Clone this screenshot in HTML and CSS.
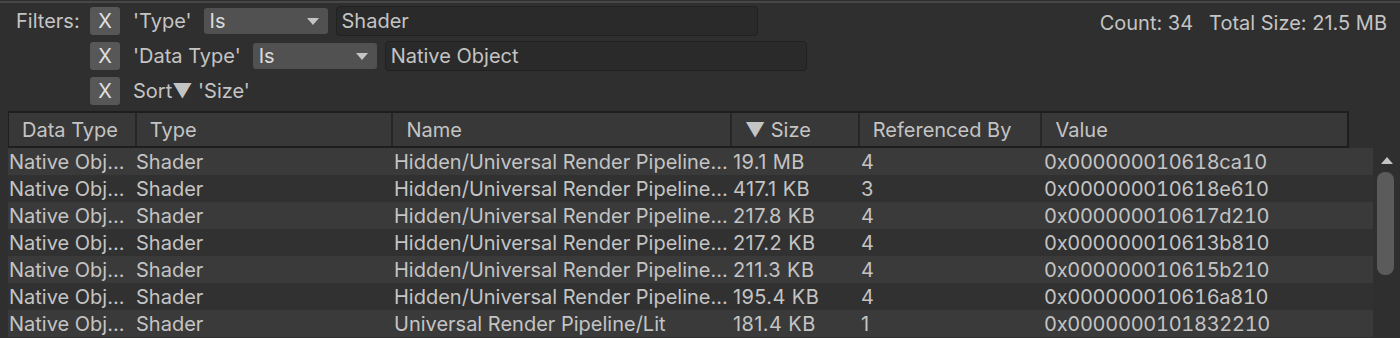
FILE: index.html
```html
<html>
<head>
  <meta charset="utf-8">
  <title>Memory Profiler - Objects</title>
  <link rel="stylesheet" href="styles.css">
</head>
<body>
  <div id="panel">
    <div class="toolbar">
      <div class="filters">
        <div class="filter-label">Filters:</div>
        <div class="filter-row">
          <div class="btn-x">X</div>
          <span class="filter-name">'Type'</span>
          <div class="dropdown">Is<span class="caret"></span></div>
          <div class="textfield">Shader</div>
        </div>
        <div class="filter-row">
          <div class="btn-x">X</div>
          <span class="filter-name">'Data Type'</span>
          <div class="dropdown">Is<span class="caret"></span></div>
          <div class="textfield">Native Object</div>
        </div>
        <div class="filter-row">
          <div class="btn-x">X</div>
          <span class="filter-name">Sort&#9660; 'Size'</span>
        </div>
      </div>
      <div class="stats">
        <span>Count: 34</span>
        <span>Total Size: 21.5 MB</span>
      </div>
    </div>

    <div class="table">
      <div class="table-body">
        <div class="header">
          <div class="th c-data">Data Type</div>
          <div class="th c-type">Type</div>
          <div class="th c-name">Name</div>
          <div class="th c-size">&#9660; Size</div>
          <div class="th c-refs">Referenced By</div>
          <div class="th c-value">Value</div>
        </div>
        <div class="rows">
          <div class="row">
            <div class="td c-data">Native Obj...</div><div class="td c-type">Shader</div>
            <div class="td c-name">Hidden/Universal Render Pipeline...</div><div class="td c-size">19.1 MB</div>
            <div class="td c-refs">4</div><div class="td c-value">0x000000010618ca10</div>
          </div>
          <div class="row">
            <div class="td c-data">Native Obj...</div><div class="td c-type">Shader</div>
            <div class="td c-name">Hidden/Universal Render Pipeline...</div><div class="td c-size">417.1 KB</div>
            <div class="td c-refs">3</div><div class="td c-value">0x000000010618e610</div>
          </div>
          <div class="row">
            <div class="td c-data">Native Obj...</div><div class="td c-type">Shader</div>
            <div class="td c-name">Hidden/Universal Render Pipeline...</div><div class="td c-size">217.8 KB</div>
            <div class="td c-refs">4</div><div class="td c-value">0x000000010617d210</div>
          </div>
          <div class="row">
            <div class="td c-data">Native Obj...</div><div class="td c-type">Shader</div>
            <div class="td c-name">Hidden/Universal Render Pipeline...</div><div class="td c-size">217.2 KB</div>
            <div class="td c-refs">4</div><div class="td c-value">0x000000010613b810</div>
          </div>
          <div class="row">
            <div class="td c-data">Native Obj...</div><div class="td c-type">Shader</div>
            <div class="td c-name">Hidden/Universal Render Pipeline...</div><div class="td c-size">211.3 KB</div>
            <div class="td c-refs">4</div><div class="td c-value">0x000000010615b210</div>
          </div>
          <div class="row">
            <div class="td c-data">Native Obj...</div><div class="td c-type">Shader</div>
            <div class="td c-name">Hidden/Universal Render Pipeline...</div><div class="td c-size">195.4 KB</div>
            <div class="td c-refs">4</div><div class="td c-value">0x000000010616a810</div>
          </div>
          <div class="row">
            <div class="td c-data">Native Obj...</div><div class="td c-type">Shader</div>
            <div class="td c-name">Universal Render Pipeline/Lit</div><div class="td c-size">181.4 KB</div>
            <div class="td c-refs">1</div><div class="td c-value">0x0000000101832210</div>
          </div>
        </div>
      </div>
      <div class="scrollbar">
        <div class="scroll-up"></div>
        <div class="thumb"></div>
      </div>
    </div>
  </div>
</body>
</html>
```

FILE: styles.css
```css
body {
  margin: 0;
  font-family: Inter, 'Noto Sans', sans-serif;
  font-size: 20px;
  color: #c4c4c4;
  background-color: #2f2f2f;
  overflow: hidden;
}

#panel {
  border-top: 2px solid #474747;
  margin-top: 1px;
  height: 335px;
  overflow: hidden;
}

.toolbar {
  display: flex;
  justify-content: space-between;
  align-items: flex-start;
  padding: 4px 13px 0 16px;
}

.filters {
  display: grid;
  grid-template-columns: 74px auto;
  row-gap: 7px;
}

.filter-label {
  grid-row: 1;
  line-height: 28px;
}

.filter-row {
  grid-column: 2;
  display: flex;
  align-items: center;
  height: 28px;
}

.btn-x {
  width: 30px;
  height: 28px;
  line-height: 28px;
  text-align: center;
  background-color: #575757;
  border-radius: 3px;
  color: #e0e0e0;
  margin-right: 13px;
}

.filter-name {
  margin-right: 12px;
}

.dropdown {
  position: relative;
  width: 118px;
  height: 26px;
  line-height: 26px;
  padding-left: 6px;
  background-color: #515151;
  border-radius: 3px;
  margin-right: 8px;
  color: #dcdcdc;
}

.caret {
  position: absolute;
  right: 9px;
  top: 10px;
  border-left: 6px solid transparent;
  border-right: 6px solid transparent;
  border-top: 7px solid #c4c4c4;
}

.textfield {
  width: 415px;
  height: 28px;
  line-height: 28px;
  padding-left: 5px;
  background-color: #2a2a2a;
  border: 1px solid #212121;
  border-radius: 4px;
}

.stats {
  display: flex;
  gap: 16px;
  line-height: 32px;
}

.table {
  display: flex;
  margin-top: 6px;
  padding-left: 8px;
}

.table-body {
  width: 1365px;
}

.header {
  display: flex;
  width: 1338px;
  height: 33px;
  background-color: #383838;
  border: 1px solid #1e1e1e;
  border-width: 2px 2px 2px 1px;
}

.th {
  line-height: 35px;
  padding-left: 13px;
  border-right: 2px solid #262626;
  box-sizing: border-box;
  white-space: nowrap;
}

.th.c-value {
  border-right: none;
}

.row {
  display: flex;
  height: 27px;
  line-height: 29px;
  background-color: #3a3a3a;
}

.row:nth-child(even) {
  background-color: #313131;
}

.td {
  padding-left: 1px;
  box-sizing: border-box;
  white-space: nowrap;
  overflow: hidden;
}

.td.c-type {
  padding-left: 0;
}

.td.c-size {
  letter-spacing: 0.4px;
}

.td.c-value {
  font-feature-settings: "tnum";
  letter-spacing: -0.3px;
}

.c-data { width: 128px; }
.c-type { width: 257px; }
.c-name { width: 339px; }
.c-size { width: 128px; }
.c-refs { width: 183px; }
.c-value { width: 305px; }

.td.c-value { width: 330px; }

.scrollbar {
  position: relative;
  width: 27px;
  margin-top: 35px;
}

.scroll-up {
  margin: 11px auto 0 auto;
  width: 0;
  height: 0;
  border-left: 6px solid transparent;
  border-right: 6px solid transparent;
  border-bottom: 7px solid #c4c4c4;
}

.thumb {
  margin: 8px 0 0 4px;
  width: 17px;
  height: 103px;
  border-radius: 8px;
  background-color: #5b5b5b;
}
```
